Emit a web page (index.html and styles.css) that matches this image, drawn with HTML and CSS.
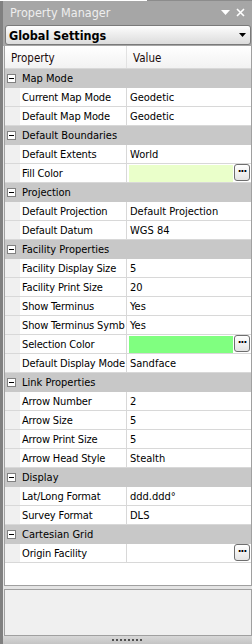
FILE: index.html
```html
<!DOCTYPE html>
<html>
<head>
<meta charset="utf-8">
<link rel="stylesheet" href="styles.css">
</head>
<body>
<div class="topline"></div>
<div class="pane">
  <div class="head">
    <div class="titlebar">
      <span class="title">Property Manager</span>
      <span class="tb-icons">
        <svg class="tb-drop" width="9" height="5" viewBox="0 0 9 5"><path d="M0 0H9L4.5 5Z" fill="#fff"/></svg>
        <svg class="tb-close" width="9" height="9" viewBox="0 0 9 9"><path d="M1 1L8 8M8 1L1 8" stroke="#fff" stroke-width="1.6"/></svg>
      </span>
    </div>
    <div class="combo">
      <span class="combo-text">Global Settings</span>
      <svg class="combo-arrow" width="7" height="4" viewBox="0 0 7 4"><path d="M0 0H7L3.5 4Z" fill="#000"/></svg>
    </div>
  </div>
  <div class="grid">
    <div class="hdr"><div class="hname">Property</div><div class="hval">Value</div></div>

    <div class="cat"><span class="toggle"></span>Map Mode</div>
    <div class="row"><div class="gut"></div><div class="name">Current Map Mode</div><div class="val">Geodetic</div></div>
    <div class="row"><div class="gut"></div><div class="name">Default Map Mode</div><div class="val">Geodetic</div></div>

    <div class="cat"><span class="toggle"></span>Default Boundaries</div>
    <div class="row"><div class="gut"></div><div class="name">Default Extents</div><div class="val">World</div></div>
    <div class="row"><div class="gut"></div><div class="name">Fill Color</div><div class="val color"><span class="swatch fill"></span><span class="dots">···</span></div></div>

    <div class="cat"><span class="toggle"></span>Projection</div>
    <div class="row"><div class="gut"></div><div class="name">Default Projection</div><div class="val">Default Projection</div></div>
    <div class="row"><div class="gut"></div><div class="name">Default Datum</div><div class="val">WGS 84</div></div>

    <div class="cat"><span class="toggle"></span>Facility Properties</div>
    <div class="row"><div class="gut"></div><div class="name">Facility Display Size</div><div class="val">5</div></div>
    <div class="row"><div class="gut"></div><div class="name">Facility Print Size</div><div class="val">20</div></div>
    <div class="row"><div class="gut"></div><div class="name">Show Terminus</div><div class="val">Yes</div></div>
    <div class="row"><div class="gut"></div><div class="name">Show Terminus Symb</div><div class="val">Yes</div></div>
    <div class="row"><div class="gut"></div><div class="name">Selection Color</div><div class="val color"><span class="swatch sel"></span><span class="dots">···</span></div></div>
    <div class="row"><div class="gut"></div><div class="name">Default Display Mode</div><div class="val">Sandface</div></div>

    <div class="cat"><span class="toggle"></span>Link Properties</div>
    <div class="row"><div class="gut"></div><div class="name">Arrow Number</div><div class="val">2</div></div>
    <div class="row"><div class="gut"></div><div class="name">Arrow Size</div><div class="val">5</div></div>
    <div class="row"><div class="gut"></div><div class="name">Arrow Print Size</div><div class="val">5</div></div>
    <div class="row"><div class="gut"></div><div class="name">Arrow Head Style</div><div class="val">Stealth</div></div>

    <div class="cat"><span class="toggle"></span>Display</div>
    <div class="row"><div class="gut"></div><div class="name">Lat/Long Format</div><div class="val">ddd.ddd°</div></div>
    <div class="row"><div class="gut"></div><div class="name">Survey Format</div><div class="val">DLS</div></div>

    <div class="cat"><span class="toggle"></span>Cartesian Grid</div>
    <div class="row"><div class="gut"></div><div class="name">Origin Facility</div><div class="val color"><span class="swatch none"></span><span class="dots">···</span></div></div>

    <div class="blank"></div>
  </div>
  <div class="gap"></div>
  <div class="desc"></div>
  <div class="grip"><span class="grip-dots"></span></div>
</div>
</body>
</html>
```

FILE: styles.css
```css
html, body {
  margin: 0;
  padding: 0;
  width: 252px;
  height: 644px;
  overflow: hidden;
  background: #e6e6e6;
  font-family: "DejaVu Sans Condensed", "DejaVu Sans", sans-serif;
  font-size: 11px;
  color: #000;
}

.topline {
  height: 1px;
  background: linear-gradient(to right, #ffffff 147px, #8c8c8c 147px);
}

.pane {
  height: 643px;
  border-left: 3px solid #808080;
  box-sizing: border-box;
  display: flex;
  flex-direction: column;
}

.head {
  background: #a6a6a6;
  height: 45px;
  padding-left: 2px;
  padding-right: 1px;
  display: flex;
  flex-direction: column;
}

.titlebar {
  height: 23px;
  display: flex;
  align-items: center;
  justify-content: space-between;
  padding-left: 5px;
  padding-right: 6px;
}

.title {
  color: #eeeeee;
  font-size: 12.5px;
}

.tb-icons {
  display: flex;
  align-items: center;
  gap: 6px;
}

.combo {
  margin-top: 1px;
  height: 20px;
  box-sizing: border-box;
  border: 1px solid #7a7a7a;
  border-radius: 3px;
  background: linear-gradient(#fdfdfd, #ececec 50%, #dcdcdc);
  display: flex;
  align-items: center;
  justify-content: space-between;
  padding-left: 3px;
  padding-right: 4px;
}

.combo-text {
  font-weight: bold;
  font-size: 12.5px;
}

.grid {
  margin-left: 1px;
  border-left: 1px solid #a0a0a0;
  border-right: 1px solid #a0a0a0;
  border-bottom: 1px solid #a0a0a0;
  background: #fff;
  display: flex;
  flex-direction: column;
}

.hdr {
  height: 23px;
  box-sizing: border-box;
  border-bottom: 1px solid #d8d8d8;
  background: linear-gradient(#ffffff, #f2f2f2);
  display: flex;
  align-items: center;
  color: #1a0a0a;
  font-size: 11.5px;
}

.hname {
  width: 122px;
  padding-left: 6px;
  padding-top: 1px;
  box-sizing: border-box;
  border-right: 1px solid #e2e2e2;
  height: 100%;
  display: flex;
  align-items: center;
}

.hval {
  padding-left: 6px;
  padding-top: 1px;
}

.cat {
  height: 19px;
  box-sizing: border-box;
  background: #c8c8c8;
  display: flex;
  align-items: center;
  padding-left: 2px;
  gap: 6px;
}

.toggle {
  width: 9px;
  height: 9px;
  box-sizing: border-box;
  border: 1px solid #808080;
  background: #fff linear-gradient(#000, #000) center / 5px 1px no-repeat;
}

.row {
  height: 19px;
  box-sizing: border-box;
  border-bottom: 1px solid #d8d8d8;
  display: flex;
}

.gut {
  width: 15px;
  background: #f0f0f0;
}

.name {
  width: 107px;
  box-sizing: border-box;
  padding-left: 2px;
  border-right: 1px solid #d8d8d8;
  white-space: nowrap;
  overflow: hidden;
  letter-spacing: -0.15px;
  display: flex;
  align-items: center;
}

.val {
  flex: 1;
  padding-left: 3px;
  display: flex;
  align-items: center;
  white-space: nowrap;
  overflow: hidden;
}

.val.color {
  padding-left: 2px;
  padding-right: 1px;
  gap: 1px;
  align-items: stretch;
  padding-top: 1px;
}

.swatch {
  flex: 1;
  height: 17px;
}

.swatch.fill { background: #eaffca; }
.swatch.sel { background: #80ff80; }
.swatch.none { background: transparent; }

.dots {
  width: 16px;
  height: 17px;
  box-sizing: border-box;
  border: 1px solid #6e6e6e;
  border-radius: 3px;
  background: linear-gradient(#ffffff, #e4e4e4);
  font-size: 11px;
  font-weight: bold;
  line-height: 13px;
  text-align: center;
  letter-spacing: -1px;
  margin-top: -1px;
}

.blank {
  height: 22px;
}

.gap {
  height: 3px;
  background: #e4e4e4;
}

.desc {
  flex: 1;
  border: 1px solid #a0a0a0;
  margin-left: 1px;
  background: #f0f0f0;
}

.grip {
  height: 8px;
  background: linear-gradient(#d8d8d8, #c4c4c4);
  display: flex;
  justify-content: center;
  align-items: center;
}

.grip-dots {
  width: 32px;
  height: 2px;
  background: repeating-linear-gradient(90deg, #505050 0 2px, transparent 2px 4px);
}
```
